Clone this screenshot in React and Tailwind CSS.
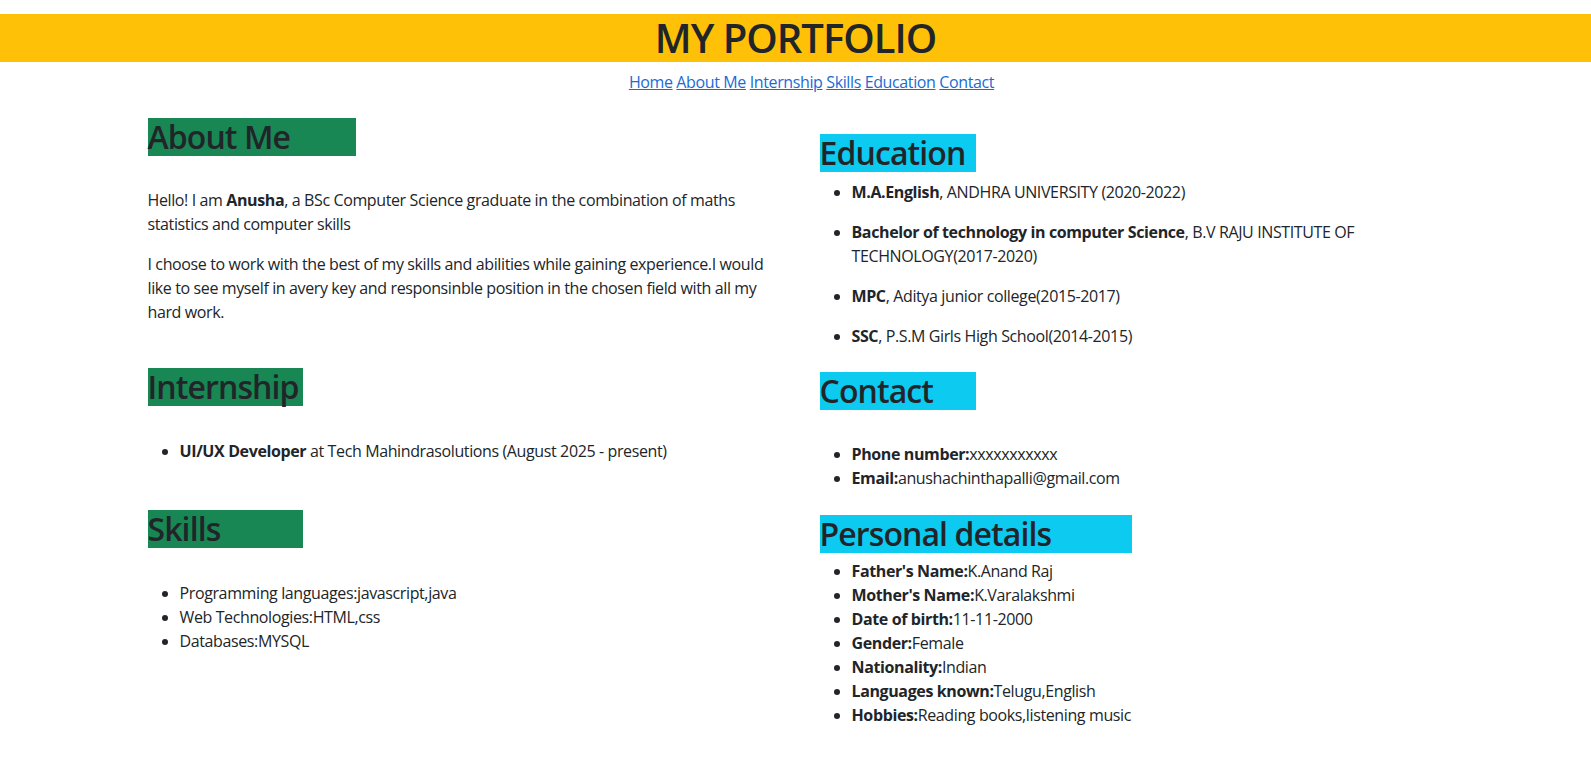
import React from 'react';

const font = { fontFamily: '"Open Sans", "Noto Sans", sans-serif' };

function Heading({ children, color, width, className = '' }) {
  return (
    <h2
      className={`${color} ${width} ${className} text-[32px] leading-[38px] font-semibold tracking-[-0.9px] text-[#212529]`}
    >
      {children}
    </h2>
  );
}

function App() {
  const links = ['Home', 'About Me', 'Internship', 'Skills', 'Education', 'Contact'];

  return (
    <div className="min-h-screen bg-white pt-[14px] text-[16px] leading-6 tracking-[-0.38px] text-[#212529]" style={font}>
      {/* Header */}
      <header className="h-[48px] bg-[#ffc107] text-center">
        <h1 className="text-[40px] leading-[48px] font-semibold tracking-[-1px] text-[#212529]">MY PORTFOLIO</h1>
      </header>

      {/* Nav */}
      <nav className="mt-2 pl-8 text-center">
        {links.map((l, i) => (
          <React.Fragment key={l}>
            <a href="#" className="text-[#1a6bd6] underline">
              {l}
            </a>
            {i < links.length - 1 ? ' ' : ''}
          </React.Fragment>
        ))}
      </nav>

      <div className="mx-auto grid w-[1320px] grid-cols-2">
        {/* Left column */}
        <div className="flex flex-col items-start px-3 pt-6">
          <Heading color="bg-[#198754]" width="w-[208px]" className="mb-8">About Me</Heading>
          <p className="mb-4">
            Hello! I am <strong className="font-bold">Anusha</strong>, a BSc Computer Science graduate in the combination of maths statistics and computer skills
          </p>
          <p className="mb-4">
            I choose to work with the best of my skills and abilities while gaining experience.I would like to see myself in avery key and responsinble position in the chosen field with all my hard work.
          </p>

          <Heading color="bg-[#198754]" width="w-[155px]" className="mt-[28px] mb-[33px]">Internship</Heading>
          <ul className="list-disc pl-8">
            <li>
              <strong className="font-bold">UI/UX Developer</strong> at Tech Mahindrasolutions (August 2025 - present)
            </li>
          </ul>

          <Heading color="bg-[#198754]" width="w-[155px]" className="mt-[47px] mb-[33px]">Skills</Heading>
          <ul className="list-disc pl-8">
            <li>Programming languages:javascript,java</li>
            <li>Web Technologies:HTML,css</li>
            <li>Databases:MYSQL</li>
          </ul>
        </div>

        {/* Right column */}
        <div className="flex flex-col items-start px-6 pt-10">
          <Heading color="bg-[#0dcaf0]" width="w-[156px]" className="mb-2">Education</Heading>
          <ul className="flex list-disc flex-col gap-4 pl-8">
            <li>
              <strong className="font-bold">M.A.English</strong>, ANDHRA UNIVERSITY (2020-2022)
            </li>
            <li>
              <strong className="font-bold">Bachelor of technology in computer Science</strong>, B.V RAJU INSTITUTE OF TECHNOLOGY(2017-2020)
            </li>
            <li>
              <strong className="font-bold">MPC</strong>, Aditya junior college(2015-2017)
            </li>
            <li>
              <strong className="font-bold">SSC</strong>, P.S.M Girls High School(2014-2015)
            </li>
          </ul>

          <Heading color="bg-[#0dcaf0]" width="w-[156px]" className="mt-6 mb-8">Contact</Heading>
          <ul className="list-disc pl-8">
            <li>
              <strong className="font-bold">Phone number:</strong>xxxxxxxxxxx
            </li>
            <li>
              <strong className="font-bold">Email:</strong>anushachinthapalli@gmail.com
            </li>
          </ul>

          <Heading color="bg-[#0dcaf0]" width="w-[312px]" className="mt-[25px] mb-[6px]">Personal details</Heading>
          <ul className="list-disc pl-8">
            <li><strong className="font-bold">Father's Name:</strong>K.Anand Raj</li>
            <li><strong className="font-bold">Mother's Name:</strong>K.Varalakshmi</li>
            <li><strong className="font-bold">Date of birth:</strong>11-11-2000</li>
            <li><strong className="font-bold">Gender:</strong>Female</li>
            <li><strong className="font-bold">Nationality:</strong>Indian</li>
            <li><strong className="font-bold">Languages known:</strong>Telugu,English</li>
            <li><strong className="font-bold">Hobbies:</strong>Reading books,listening music</li>
          </ul>
        </div>
      </div>
    </div>
  );
}

export default App;
